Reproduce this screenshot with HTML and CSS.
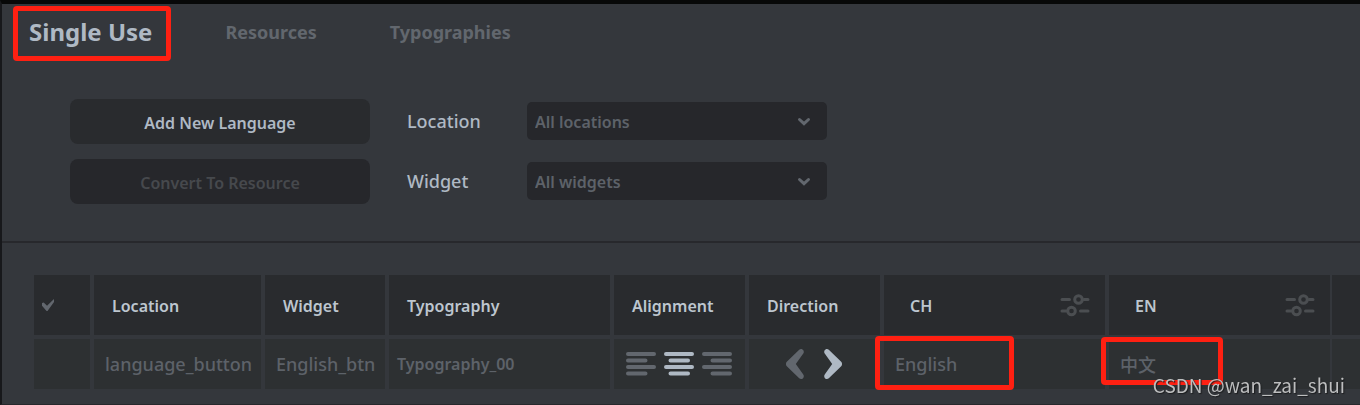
FILE: index.html
```
<!DOCTYPE html>
<html lang="en">
<head>
  <meta charset="UTF-8" />
  <meta name="viewport" content="width=device-width, initial-scale=1.0"/>
  <title>Texts - Single Use</title>
  <link rel="stylesheet" href="styles.css">
</head>
<body>
  <nav class="tabs">
    <a href="#single" class="tab active marked">Single Use</a>
    <a href="#resources" class="tab">Resources</a>
    <a href="#typographies" class="tab">Typographies</a>
  </nav>

  <section class="toolbar">
    <div class="actions">
      <button type="button" class="action">Add New Language</button>
      <button type="button" class="action" disabled>Convert To Resource</button>
    </div>
    <div class="filters">
      <div class="filter">
        <label for="location">Location</label>
        <div class="select-wrap">
          <select id="location"><option>All locations</option></select>
          <svg class="chevron" width="14" height="10" viewBox="0 0 14 10"><path d="M2.500 2.500 7 6.700l4.500-4.200" /></svg>
        </div>
      </div>
      <div class="filter">
        <label for="widget">Widget</label>
        <div class="select-wrap">
          <select id="widget"><option>All widgets</option></select>
          <svg class="chevron" width="14" height="10" viewBox="0 0 14 10"><path d="M2.500 2.500 7 6.700l4.500-4.200" /></svg>
        </div>
      </div>
    </div>
  </section>

  <main class="content">
    <table class="texts">
      <colgroup>
        <col class="col-check"><col class="col-location"><col class="col-widget"><col class="col-typography">
        <col class="col-small"><col class="col-small"><col class="col-lang"><col class="col-last"><col>
      </colgroup>
      <thead>
        <tr>
          <th class="check-cell"><input type="checkbox" class="check" aria-label="Select all"></th>
          <th>Location</th>
          <th>Widget</th>
          <th>Typography</th>
          <th>Alignment</th>
          <th>Direction</th>
          <th class="lang">
            <div class="lang-head">CH
              <button type="button" class="icon-btn settings" aria-label="CH settings">
                <svg width="30" height="24" viewBox="0 0 30 24"><path d="M2 5.500h7.500M24 5.500h4M2 17h4M20.500 17H28" /><circle cx="18.500" cy="5.500" r="3.800" /><circle cx="11.500" cy="17" r="3.800" /></svg>
              </button>
            </div>
          </th>
          <th class="lang thin">
            <div class="lang-head">EN
              <button type="button" class="icon-btn settings" aria-label="EN settings">
                <svg width="30" height="24" viewBox="0 0 30 24"><path d="M2 5.500h7.500M24 5.500h4M2 17h4M20.500 17H28" /><circle cx="18.500" cy="5.500" r="3.800" /><circle cx="11.500" cy="17" r="3.800" /></svg>
              </button>
            </div>
          </th>
          <th class="rest"></th>
        </tr>
      </thead>
      <tbody>
        <tr>
          <td></td>
          <td>language_button</td>
          <td>English_btn</td>
          <td class="typography">Typography_00</td>
          <td class="align-cell">
            <div class="icons align">
              <button type="button" class="icon-btn" aria-label="Align left">
                <svg width="30" height="24" viewBox="0 0 30 24"><path d="M2 2h26M2 8.500h17.500M2 15h26M2 21.500h17.500" /></svg>
              </button>
              <button type="button" class="icon-btn on" aria-label="Align center">
                <svg width="30" height="24" viewBox="0 0 30 24"><path d="M2 2h26M6.500 8.500h17.500M2 15h26M6.500 21.500h17.500" /></svg>
              </button>
              <button type="button" class="icon-btn" aria-label="Align right">
                <svg width="30" height="24" viewBox="0 0 30 24"><path d="M2 2h26M10.500 8.500h17.500M2 15h26M10.500 21.500h17.500" /></svg>
              </button>
            </div>
          </td>
          <td>
            <div class="icons direction">
              <button type="button" class="icon-btn" aria-label="Right to left">
                <svg width="18" height="30" viewBox="0 0 18 30"><path d="M13.200.8c1.400-1.300 3.500-.8 4.300.8.500 1.200.4 2.200-.4 3.200L9.800 15l7.300 10.200c.8 1 .9 2 .4 3.200-.8 1.600-2.900 2.100-4.300.8L.8 17.200C-.3 16-.3 14 .8 12.800z" /></svg>
              </button>
              <button type="button" class="icon-btn on" aria-label="Left to right">
                <svg width="18" height="30" viewBox="0 0 18 30"><path d="M4.800.8C3.400-.5 1.300 0 .5 1.600 0 2.800.1 3.800.9 4.800L8.200 15 .9 25.200c-.8 1-.9 2-.4 3.200.8 1.600 2.900 2.100 4.300.8l12.400-12c1.100-1.200 1.100-3.200 0-4.400z" /></svg>
              </button>
            </div>
          </td>
          <td><span class="value marked">English</span></td>
          <td class="thin"><span class="value marked zh" lang="zh">中文</span></td>
          <td class="rest"></td>
        </tr>
      </tbody>
    </table>
  </main>

  <div class="watermark">CSDN @wan_zai_shui</div>
</body>
</html>
```

FILE: styles.css
```
* {
  box-sizing: border-box;
}
body {
  margin: 0;
  min-height: 100vh;
  font-family: "Noto Sans", "Noto Sans CJK SC", sans-serif;
  font-size: 18px;
  font-weight: 500;
  color: #afb9c4;
  background: #34373c;
  border-top: 4px solid #070808;
  border-left: 2px solid #17181b;
  border-bottom: 1px solid #27282c;
}
button,
select {
  font: inherit;
  color: inherit;
  border: none;
}
svg {
  display: block;
  fill: none;
  stroke: currentColor;
  stroke-width: 4;
  stroke-linecap: round;
}

/* red highlight box */
.marked {
  position: relative;
}
.marked::after {
  content: "";
  position: absolute;
  border: 5px solid #ff2012;
  border-radius: 4px;
}

.tabs {
  display: flex;
  align-items: center;
  gap: 73px;
  padding: 10px 27px 0;
}
.tab {
  font-size: 18px;
  line-height: 36px;
  font-weight: 700;
  color: #62676e;
  text-decoration: none;
}
.tab.active {
  font-size: 24px;
  color: #afb9c4;
}
.tab.marked::after {
  inset: -8px -19px -11px -16px;
}

.toolbar {
  display: flex;
  gap: 37px;
  padding: 49px 68px 37px;
  border-bottom: 2px solid #27282c;
}
.actions,
.filters {
  display: flex;
  flex-direction: column;
  gap: 15px;
}
.action {
  width: 300px;
  height: 45px;
  padding: 3px 0 0;
  font-size: 16px;
  font-weight: 600;
  background: #292b2e;
  border-radius: 8px;
}
.action:disabled {
  color: #46494d;
  background: #26272b;
}
.filter {
  display: flex;
  align-items: center;
  height: 44px;
  margin-bottom: 1px;
}
.filter label {
  width: 120px;
}
.select-wrap {
  position: relative;
}
.filter select {
  display: block;
  appearance: none;
  width: 300px;
  height: 38px;
  padding: 2px 8px 0;
  font-size: 16px;
  font-weight: 600;
  color: #5d6269;
  background: #26272b;
  border-radius: 5px;
}
.chevron {
  position: absolute;
  right: 16px;
  top: 15px;
  color: #62676e;
  stroke-width: 3;
  pointer-events: none;
}

.content {
  padding: 32px 0 14px 32px;
}
.texts {
  width: 100%;
  table-layout: fixed;
  border-spacing: 0;
}
.col-check { width: 60px; }
.col-location { width: 171px; }
.col-widget { width: 124px; }
.col-typography { width: 225px; }
.col-small { width: 135px; }
.col-lang { width: 225px; }
.col-last { width: 223px; }
.texts th,
.texts td {
  text-align: left;
  white-space: nowrap;
  border-right: 4px solid #34373c;
}
.texts th {
  height: 64px;
  padding: 2px 0 0 18px;
  font-size: 16px;
  font-weight: 600;
  color: #bdc6cf;
  background: #292b2e;
  border-bottom: 4px solid #34373c;
}
.texts td {
  height: 50px;
  padding: 0 0 0 11px;
  color: #5d6269;
  background: #2d3032;
}
.texts th.lang {
  padding-left: 26px;
}
.texts .thin {
  border-right-width: 2px;
}
.texts .rest {
  border-right: none;
}
.texts .typography {
  padding-left: 8px;
  font-size: 16px;
  font-weight: 600;
}
.texts .align-cell {
  padding-left: 12px;
}
.texts .check-cell {
  padding: 0 0 0 8px;
}
.check {
  display: block;
  appearance: none;
  width: 12px;
  height: 12px;
  margin: 0;
  background: #62676e;
  clip-path: polygon(0 34%, 14% 30%, 42% 56%, 100% 0, 100% 26%, 46% 100%, 38% 100%, 0 56%);
}
.lang-head {
  display: flex;
  align-items: center;
  justify-content: space-between;
  padding-right: 15px;
}
.icon-btn {
  padding: 0;
  color: #62676e;
  background: none;
  cursor: pointer;
}
.icon-btn.on {
  color: #afb9c4;
}
.settings {
  color: #4b4e51;
}
.settings svg {
  stroke-width: 3;
}
.icons {
  display: flex;
}
.align {
  gap: 8px;
}
.direction {
  gap: 20px;
  padding-left: 26px;
}
.direction svg {
  fill: currentColor;
  stroke: none;
}
.value {
  display: inline-block;
}
.value.marked::after {
  inset: -16px -57px -14px -20px;
}
.value.zh.marked::after {
  inset: -14px -67px -8px -19px;
}

.watermark {
  position: fixed;
  right: 15px;
  bottom: 6px;
  font-family: "Noto Sans CJK SC", sans-serif;
  font-size: 19px;
  font-weight: 400;
  line-height: 28px;
  color: #bdbebf;
  text-shadow: 1px 1px 1px #1c1d1f;
}
```
